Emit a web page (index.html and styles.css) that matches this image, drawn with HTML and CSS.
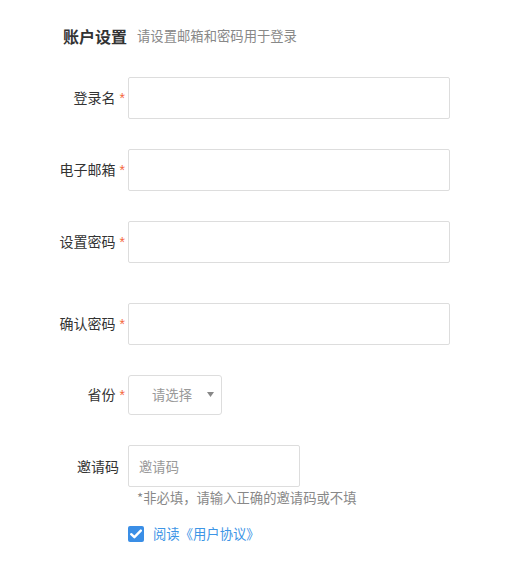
FILE: index.html
```html
<!DOCTYPE html>
<html lang="zh-CN">
<head>
<meta charset="utf-8">
<title>账户设置</title>
<link rel="stylesheet" href="styles.css">
</head>
<body>
<div class="page">
  <div class="head">
    <h2 class="title">账户设置</h2>
    <span class="sub">请设置邮箱和密码用于登录</span>
  </div>
  <div class="form">
    <div class="row">
      <label class="lbl">登录名<span class="req">*</span></label>
      <input class="ipt" type="text">
    </div>
    <div class="row">
      <label class="lbl">电子邮箱<span class="req">*</span></label>
      <input class="ipt" type="text">
    </div>
    <div class="row row-tall">
      <label class="lbl">设置密码<span class="req">*</span></label>
      <input class="ipt" type="password">
    </div>
    <div class="row">
      <label class="lbl">确认密码<span class="req">*</span></label>
      <input class="ipt" type="password">
    </div>
    <div class="row">
      <label class="lbl">省份<span class="req">*</span></label>
      <div class="select">
        <span class="select-text">请选择</span>
        <svg class="arrow" width="7" height="5" viewBox="0 0 7 5"><path d="M0 0H7L3.5 5Z" fill="#888"/></svg>
      </div>
    </div>
    <div class="row row-invite">
      <label class="lbl lbl-plain">邀请码</label>
      <input class="ipt ipt-short" type="text" placeholder="邀请码">
    </div>
    <div class="hint">*非必填，请输入正确的邀请码或不填</div>
    <label class="agree">
      <span class="check">
        <svg width="12" height="10" viewBox="0 0 12 10"><path d="M1.2 5.2L4.4 8.2L10.8 1.6" fill="none" stroke="#fff" stroke-width="2.4" stroke-linecap="round" stroke-linejoin="round"/></svg>
      </span>
      <span class="agree-text">阅读《用户协议》</span>
    </label>
  </div>
</div>
</body>
</html>
```
FILE: styles.css
```css
html, body {
  margin: 0;
  padding: 0;
  background: #fff;
}
body {
  font-family: "Noto Sans CJK SC", "Noto Sans", "Liberation Sans", sans-serif;
  color: #333;
}
.page {
  padding-top: 25px;
}
.head {
  display: flex;
  align-items: center;
  padding-left: 63px;
  height: 22px;
  margin-bottom: 30px;
}
.title {
  margin: 0;
  font-size: 16px;
  line-height: 22px;
  font-weight: bold;
  color: #333;
}
.sub {
  margin-left: 10px;
  font-size: 13.33px;
  line-height: 22px;
  color: #888;
}
.form {
  display: flex;
  flex-direction: column;
}
.row {
  display: flex;
  align-items: center;
  margin-bottom: 30px;
}
.row-tall {
  margin-bottom: 40px;
}
.row-invite {
  margin-bottom: 2px;
}
.lbl {
  width: 125px;
  box-sizing: border-box;
  text-align: right;
  font-size: 14px;
  line-height: 20px;
  color: #333;
  margin-right: 3px;
  padding-bottom: 1px;
}
.lbl-plain {
  padding-right: 6px;
}
.req {
  color: #f4683c;
  margin-left: 4px;
  font-family: "Liberation Sans", sans-serif;
  font-size: 14px;
}
.ipt {
  width: 322px;
  height: 42px;
  box-sizing: border-box;
  border: 1px solid #ddd;
  border-radius: 2px;
  padding: 0 10px;
  margin: 0;
  font-family: inherit;
  font-size: 13.33px;
  color: #333;
  outline: none;
  background: #fff;
}
.ipt::placeholder {
  color: #999;
}
.ipt-short {
  width: 172px;
}
.select {
  width: 94px;
  height: 40px;
  box-sizing: border-box;
  border: 1px solid #ddd;
  border-radius: 3px;
  display: flex;
  align-items: center;
  padding-left: 23px;
  padding-right: 7px;
  justify-content: space-between;
}
.select-text {
  font-size: 13.33px;
  color: #999;
  line-height: 20px;
}
.arrow {
  display: block;
  margin-top: -1px;
}
.hint {
  margin-left: 137px;
  font-size: 13.33px;
  line-height: 18px;
  color: #888;
}
.agree {
  display: flex;
  align-items: center;
  margin-left: 128px;
  margin-top: 17px;
  height: 20px;
}
.check {
  width: 16px;
  height: 16px;
  border-radius: 2px;
  background: #3a8ee6;
  display: flex;
  align-items: center;
  justify-content: center;
}
.agree-text {
  margin-left: 9px;
  font-size: 13.33px;
  line-height: 20px;
  color: #3d95e6;
}
```
